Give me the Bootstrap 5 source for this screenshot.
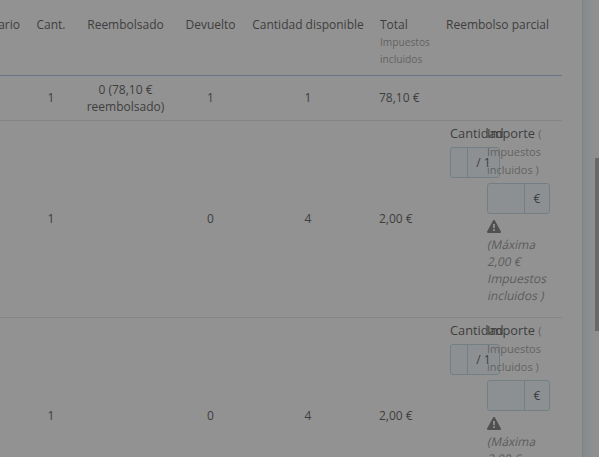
<!DOCTYPE html>
<html lang="es">
<head>
    <meta charset="UTF-8">
    <meta name="viewport" content="width=device-width, initial-scale=1.0">
    <title>Reembolso parcial</title>
    <link href="https://cdn.jsdelivr.net/npm/bootstrap@5.3.0/dist/css/bootstrap.min.css" rel="stylesheet">
    <style>
        body {
            height: 457px;
            background-color: #8b8f90;
            color: #3e3e3e;
            font-family: "Open Sans", sans-serif;
            font-size: 12px;
            line-height: 17px;
        }
        .refund-panel {
            width: 583px;
            background: #929292;
            border-right: 1px solid #7b8283;
        }
        .gutter {
            width: 10px;
            background: linear-gradient(to right, #868a8a, #8d9092);
        }
        .scroll-track {
            width: 6px;
            background: #8f8f8f;
            padding: 158px 0 0 2px;
        }
        .scroll-thumb {
            height: 173px;
            background: #686868;
        }
        .refund-table {
            width: 562px;
            table-layout: fixed;
            color: inherit;
            --bs-table-bg: transparent;
            --bs-table-color: #3e3e3e;
        }
        .refund-table th {
            height: 75px;
            padding: 16px 5px 0 4px;
            font-weight: 400;
            vertical-align: top;
            border-bottom: 1px solid #647889;
        }
        .refund-table td {
            padding: 5px 5px 5px 3px;
            vertical-align: middle;
            border-bottom: 1px solid #858585;
        }
        .refund-table td.text-center,
        .refund-table th.text-center {
            padding-left: 0;
            padding-right: 0;
        }
        .refund-table td.text-center.refunded,
        .refund-table th.text-center.refunded {
            padding-right: 1px;
        }
        .refund-table td.refund-cell {
            padding: 3px 0 13px 8px;
            vertical-align: top;
        }
        .owner-label {
            padding-right: 6px;
        }
        .tax-note {
            padding-top: 1px;
            font-size: 10.2px;
            color: #636363;
        }
        .amount-label {
            font-size: 12.8px;
            line-height: 18px;
        }
        .amount-label span {
            font-size: 11px;
            line-height: 1;
            color: #636363;
        }
        .qty-col {
            width: 37px;
        }
        .amount-col {
            width: 63px;
        }
        .qty-group {
            width: 50px;
            margin-top: 5px;
        }
        .amount-group {
            margin-top: 5px;
        }
        .refund-group {
            height: 31px;
            border: 1px solid #747f83;
            border-radius: 3px;
            background: #8d9092;
        }
        .refund-group input {
            width: 0;
            min-width: 0;
            padding: 0;
            border: 0;
            background: transparent;
        }
        .refund-group .unit {
            border-left: 1px solid #747f83;
        }
        .qty-group .unit {
            width: 32px;
        }
        .amount-group .unit {
            width: 25px;
        }
        .warn-icon {
            display: block;
            margin: 6px 0 3px;
        }
        .max-note {
            padding-left: 1px;
            color: #5c5c5c;
        }
        .max-note span {
            display: inline-block;
            transform: skewX(-12deg);
        }
    </style>
</head>
<body class="d-flex overflow-hidden">
    <div class="refund-panel flex-shrink-0 overflow-hidden">
        <table class="refund-table table mb-0">
            <colgroup>
                <col width="31"><col width="40"><col width="110"><col width="59"><col width="136"><col width="66"><col width="120">
            </colgroup>
            <thead>
                <tr>
                    <th><div class="owner-label d-flex justify-content-end">unitario</div></th>
                    <th class="text-center">Cant.</th>
                    <th class="text-center refunded">Reembolsado</th>
                    <th class="text-center">Devuelto</th>
                    <th class="text-center">Cantidad disponible</th>
                    <th>Total <div class="tax-note">Impuestos incluidos</div></th>
                    <th class="text-nowrap">Reembolso parcial</th>
                </tr>
            </thead>
            <tbody id="refundRows">
                <tr>
                    <td></td>
                    <td class="text-center">1</td>
                    <td class="text-center refunded">0 (78,10 €<br>reembolsado)</td>
                    <td class="text-center">1</td>
                    <td class="text-center">1</td>
                    <td>78,10 €</td>
                    <td></td>
                </tr>
            </tbody>
        </table>
    </div>
    <div class="gutter flex-shrink-0"></div>
    <div class="scroll-track flex-shrink-0"><div class="scroll-thumb"></div></div>

    <script src="https://cdn.jsdelivr.net/npm/bootstrap@5.3.0/dist/js/bootstrap.bundle.min.js"></script>
    <script>
        const products = [
            { quantity: 1, returned: 0, available: 4, total: "2,00 €" },
            { quantity: 1, returned: 0, available: 4, total: "2,00 €" }
        ];

        products.forEach(product => {
            let tr = document.createElement("tr");
            tr.innerHTML = `
                <td></td>
                <td class="text-center">${product.quantity}</td>
                <td></td>
                <td class="text-center">${product.returned}</td>
                <td class="text-center">${product.available}</td>
                <td>${product.total}</td>
                <td class="refund-cell">
                    <div class="d-flex">
                        <div class="qty-col flex-shrink-0">
                            <div class="amount-label">Cantidad</div>
                            <div class="refund-group qty-group d-flex">
                                <input class="flex-grow-1" type="text">
                                <div class="unit d-flex align-items-center justify-content-center">/ ${product.quantity}</div>
                            </div>
                        </div>
                        <div class="amount-col flex-shrink-0">
                            <div class="amount-label">Importe <span>( Impuestos incluidos )</span></div>
                            <div class="refund-group amount-group d-flex">
                                <input class="flex-grow-1" type="text">
                                <div class="unit d-flex align-items-center justify-content-center">€</div>
                            </div>
                            <svg class="warn-icon" width="14" height="13" viewBox="0 0 14 13">
                                <path fill="#505050" d="M6.1.4a1 1 0 0 1 1.8 0l6 11.1a1 1 0 0 1-.9 1.5H1a1 1 0 0 1-.9-1.5z"/>
                                <path fill="#929292" d="M6 4h2l-.2 4.2H6.2zM6.1 9.2h1.8V11H6.1z"/>
                            </svg>
                            <div class="max-note">
                                <span>(Máxima</span>
                                <span>${product.total}</span>
                                <span>Impuestos</span>
                                <span>incluidos )</span>
                            </div>
                        </div>
                    </div>
                </td>
            `;
            document.getElementById("refundRows").appendChild(tr);
        });
    </script>
</body>
</html>
